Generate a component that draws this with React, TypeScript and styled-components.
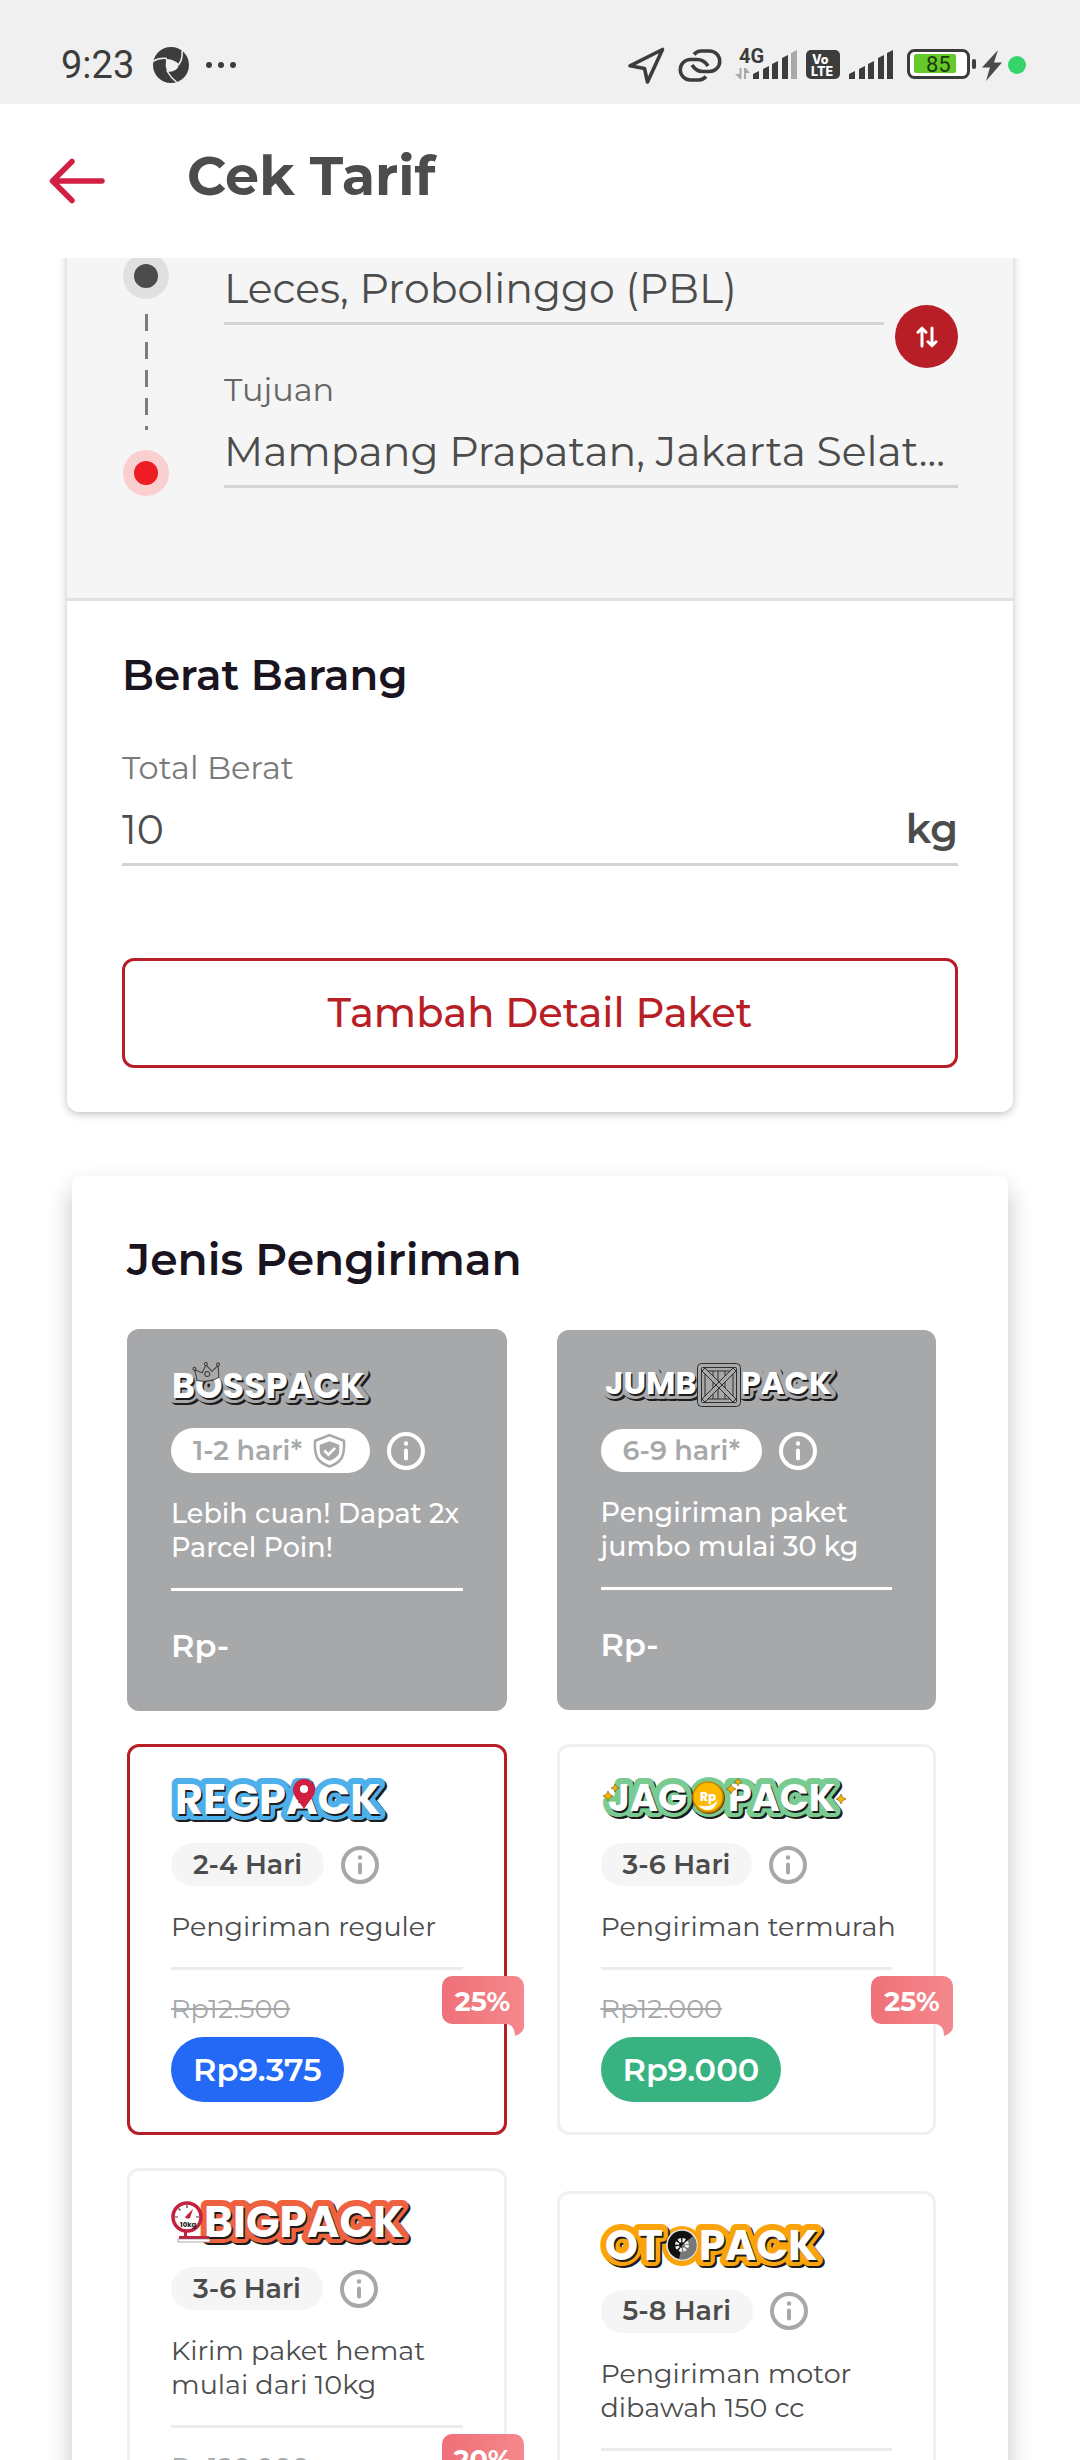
import React, { useState } from "react";
import styled, { createGlobalStyle } from "styled-components";

const color = {
  ink: "#4c4c4c",
  heading: "#1a1320",
  muted: "#a7a8aa",
  label: "#7a7a7a",
  line: "#d3d3d8",
  soft: "#f5f5f5",
  brand: "#b81e26",
};

const GlobalStyle = createGlobalStyle`
  * { box-sizing: border-box; }
  html, body, #root { height: 100%; }
  body {
    margin: 0;
    background: #fff;
    color: ${color.ink};
    font-family: Montserrat, Inter, "Open Sans", sans-serif;
    overflow: hidden;
  }
  h1, h2, p { margin: 0; }
  button, input { font: inherit; color: inherit; }
  button { cursor: pointer; padding: 0; border: 0; background: none; }
`;

/* ---------- shell ---------- */

const Screen = styled.div`
  display: flex;
  flex-direction: column;
  height: 100vh;
`;

const StatusBar = styled.div`
  display: flex;
  flex: none;
  align-items: center;
  justify-content: space-between;
  height: 104px;
  padding: 26px 54px 0 61px;
  background: #f0f0f0;
  color: #3c3c3c;

  svg {
    flex: none;
    overflow: visible;
  }
`;

const StatusGroup = styled.div<{ $gap: number }>`
  display: flex;
  align-items: center;
  gap: ${(p) => p.$gap}px;
`;

const Clock = styled.span`
  font: 400 38px/44px Roboto, sans-serif;
  margin-right: 3px;
`;

const LiveDot = styled.span`
  width: 18px;
  height: 18px;
  border-radius: 50%;
  background: #36d46a;
`;

const Header = styled.header`
  display: flex;
  flex: none;
  align-items: center;
  gap: 79px;
  height: 154px;
  padding: 0 48px;
`;

const BackButton = styled.button`
  display: flex;
  color: #d21f43;
`;

const Title = styled.h1`
  padding-bottom: 10px;
  font-size: 54px;
  line-height: 64px;
  font-weight: 700;
`;

const Scroller = styled.main`
  flex: 1;
  min-height: 0;
  overflow: hidden;
`;

/* ---------- shipment form ---------- */

const FormCard = styled.form`
  margin: -29px 67px 0;
  border-radius: 12px;
  background: #fff;
  box-shadow: 0 2px 8px rgba(0, 0, 0, 0.26);
  overflow: hidden;
`;

const RouteSection = styled.section`
  display: flex;
  align-items: flex-start;
  gap: 55px;
  padding: 24px 55px 102px 56px;
  border-bottom: 3px solid #e0e0e0;
  background: ${color.soft};
`;

const RouteTrack = styled.div`
  display: flex;
  flex: none;
  flex-direction: column;
  align-items: center;
`;

const Stop = styled.span<{ $dot: string; $halo: string }>`
  width: 46px;
  height: 46px;
  border: 11px solid ${(p) => p.$halo};
  border-radius: 50%;
  background: ${(p) => p.$dot};
`;

const Dashes = styled.span`
  width: 3px;
  height: 116px;
  margin: 15px 0 20px;
  background: repeating-linear-gradient(#7d7d7d 0 17px, transparent 17px 28px);
`;

const RouteFields = styled.div`
  display: grid;
  flex: 1;
  min-width: 0;
  grid-template-columns: 1fr 63px;
  grid-template-rows: 72px 43px auto;
  column-gap: 11px;
`;

const SwapButton = styled.button`
  display: flex;
  grid-column: 2;
  grid-row: 1 / 3;
  align-self: end;
  align-items: center;
  justify-content: center;
  height: 63px;
  border-radius: 50%;
  background: ${color.brand};
  color: #fff;
`;

const Destination = styled.div`
  grid-column: 1 / 3;
`;

const FieldLabel = styled.label<{ $tone?: string }>`
  display: block;
  margin-bottom: 4px;
  color: ${(p) => p.$tone ?? color.label};
  font-size: 32px;
  line-height: 44px;
  font-weight: 400;
`;

const FieldRow = styled.div`
  display: flex;
  align-items: center;
  height: 72px;
  border-bottom: 3px solid ${color.line};
`;

const TextInput = styled.input`
  flex: 1;
  width: 100%;
  min-width: 0;
  padding: 0;
  border: 0;
  outline: 0;
  background: none;
  font-size: 41px;
  line-height: 50px;
  font-weight: 400;
  text-overflow: ellipsis;
`;

const Unit = styled.span`
  font-size: 40px;
  line-height: 50px;
  font-weight: 600;
`;

const SectionTitle = styled.h2`
  color: ${color.heading};
  font-size: 42px;
  line-height: 50px;
  font-weight: 600;
`;

const WeightSection = styled.section`
  padding: 49px 55px 44px;

  ${SectionTitle} {
    margin-bottom: 46px;
  }
`;

const OutlineButton = styled.button`
  width: 100%;
  height: 110px;
  margin-top: 92px;
  border: 3px solid ${color.brand};
  border-radius: 12px;
  color: ${color.brand};
  font-size: 40px;
  line-height: 50px;
  font-weight: 500;
`;

/* ---------- services ---------- */

const ServicesCard = styled.section`
  margin: 64px 72px 0;
  padding: 58px 72px 80px 55px;
  border-radius: 10px;
  background: #fff;
  box-shadow: 0 12px 24px rgba(0, 0, 0, 0.24);

  ${SectionTitle} {
    font-size: 44px;
  }
`;

const ServiceGrid = styled.div`
  display: grid;
  grid-template-columns: repeat(2, minmax(0, 1fr));
  align-items: center;
  gap: 33px 50px;
  margin-top: 45px;
`;

const Service = styled.article<{ $selected?: boolean; $disabled?: boolean }>`
  padding: 30px 41px;
  border: 3px solid
    ${(p) => (p.$disabled ? color.muted : p.$selected ? color.brand : "#f0f0f0")};
  border-radius: 12px;
  background: ${(p) => (p.$disabled ? color.muted : "#fff")};
  color: ${(p) => (p.$disabled ? "#fff" : color.ink)};
`;

const LogoSvg = styled.svg`
  display: block;
  width: 250px;
  height: 44px;
  margin-bottom: 22px;
  overflow: visible;
  font-family: Poppins, Montserrat, Inter, sans-serif;
  font-weight: 700;
`;

const EtaRow = styled.div`
  display: flex;
  align-items: center;
  gap: 17px;
`;

const EtaPill = styled.span<{ $disabled?: boolean }>`
  display: flex;
  align-items: center;
  gap: 9px;
  min-height: 43px;
  padding: 4px 22px;
  border-radius: 23px;
  background: ${(p) => (p.$disabled ? "#fff" : color.soft)};
  color: ${(p) => (p.$disabled ? color.muted : color.ink)};
  font-size: 27px;
  line-height: 34px;
  font-weight: 600;
`;

const InfoButton = styled.button<{ $disabled?: boolean }>`
  display: flex;
  color: ${(p) => (p.$disabled ? "#fff" : color.muted)};
`;

const Description = styled.p<{ $disabled?: boolean }>`
  margin-top: 24px;
  padding-bottom: 23px;
  font-size: 27px;
  line-height: 34px;
  font-weight: ${(p) => (p.$disabled ? 500 : 400)};
  white-space: pre;
`;

const PriceArea = styled.div<{ $disabled?: boolean }>`
  position: relative;
  padding-top: ${(p) => (p.$disabled ? 35 : 22)}px;
  padding-bottom: ${(p) => (p.$disabled ? 12 : 0)}px;
  border-top: 3px solid ${(p) => (p.$disabled ? "#fff" : "#ebebf0")};
`;

const NoPrice = styled.p`
  font-size: 32px;
  line-height: 40px;
  font-weight: 600;
`;

const OldPrice = styled.s`
  display: block;
  margin-bottom: 11px;
  color: ${color.muted};
  font-size: 27px;
  line-height: 34px;
  text-decoration-thickness: 2px;
`;

const PriceSlot = styled.div`
  display: flex;
  min-height: 65px;
`;

const PriceButton = styled.button<{ $fill: string }>`
  height: 65px;
  padding: 0 22px;
  border-radius: 33px;
  background: ${(p) => p.$fill};
  color: #fff;
  font-size: 32px;
  line-height: 40px;
  font-weight: 600;
`;

const DiscountTag = styled.span`
  position: absolute;
  top: 6px;
  right: -61px;
  width: 82px;
  height: 60px;
  color: #fff;
  font-size: 27px;
  line-height: 52px;
  font-weight: 700;
  text-align: center;
  isolation: isolate;

  svg {
    position: absolute;
    inset: 0;
    z-index: -1;
  }
`;

/* ---------- icons ---------- */

const ApertureIcon = () => (
  <svg width="36" height="36" viewBox="0 0 36 36" aria-hidden="true">
    <circle cx="18" cy="18" r="18" fill="#3c3c3c" />
    <path d="M13 12q7 0 13 5-1 8-12 8-2-6-1-13z" fill="#f0f0f0" />
    <path
      d="M0 14.500q6-4 14-3M29 4q1 8-3.500 14M14 24q4 7 10 11.500"
      fill="none"
      stroke="#f0f0f0"
      strokeWidth="1.500"
    />
  </svg>
);

const MoreDots = () => (
  <svg width="32" height="8" viewBox="0 0 32 8" fill="#3c3c3c" aria-hidden="true">
    <circle cx="4" cy="4" r="3" />
    <circle cx="16" cy="4" r="3" />
    <circle cx="28" cy="4" r="3" />
  </svg>
);

const NavIcon = () => (
  <svg width="37" height="37" viewBox="0 0 37 37" aria-hidden="true">
    <path
      d="M34.500 2.500 19.500 35l-3-13.500L2 18.800z"
      fill="none"
      stroke="#3c3c3c"
      strokeWidth="3.600"
      strokeLinejoin="round"
    />
  </svg>
);

const LinkIcon = () => (
  <svg width="42" height="33" viewBox="0 0 42 33" aria-hidden="true">
    <g fill="none" stroke="#3c3c3c" strokeWidth="3.500">
      <path d="M15 5.500Q18 2 22 2h8.500a10 10 0 0 1 0 20.500H24q-7 0-11-6.500" />
      <path d="M27 27.500Q24 31 20 31h-8.500a10 10 0 0 1 0-20.500H18q7 0 11 6.500" />
    </g>
  </svg>
);

const bars = [
  [0, 21],
  [10, 16],
  [19, 11],
  [29, 5],
  [38, 0],
];

const Bars = ({ x = 0, weak = false }: { x?: number; weak?: boolean }) => (
  <g>
    {bars.map(([bx, top], i) => (
      <path
        key={bx}
        d={`M${x + bx} 29V${top + 3}l6-3V29z`}
        fill={weak && i === 4 ? "#a9a9a9" : "#3c3c3c"}
      />
    ))}
  </g>
);

const MobileSignal = () => (
  <svg width="62" height="32" viewBox="0 -1 62 32" aria-hidden="true">
    <text x="4" y="13" fontFamily="Roboto, sans-serif" fontSize="20" fontWeight="700" fill="#3c3c3c">
      4G
    </text>
    <path d="M0 24h4.500v-6h2v11H5zM9 29V18h2l4 5h-4v6z" fill="#a9a9a9" />
    <Bars x={18} weak />
  </svg>
);

const SecondSignal = () => (
  <svg width="44" height="32" viewBox="0 -1 44 32" aria-hidden="true">
    <Bars />
  </svg>
);

const VolteIcon = () => (
  <svg width="34" height="32" viewBox="0 -1 34 32" aria-hidden="true">
    <rect width="34" height="29" rx="5" fill="#3c3c3c" />
    <g fill="#fff" fontFamily="Inter, sans-serif" fontWeight="800" fontSize="12.500">
      <text x="6" y="13.500">Vo</text>
      <text x="5" y="26">LTE</text>
    </g>
  </svg>
);

const BatteryIcon = () => (
  <svg width="69" height="32" viewBox="0 0 69 32" aria-hidden="true">
    <rect x="1.500" y="1.500" width="60" height="27" rx="6" fill="#fff" stroke="#3c3c3c" strokeWidth="3" />
    <rect x="7" y="5" width="42" height="19" rx="2" fill="#66c92a" />
    <rect x="65" y="10" width="4" height="10" rx="2" fill="#3c3c3c" />
    <text x="19" y="23" fontFamily="Roboto, sans-serif" fontSize="22" fontWeight="400" fill="#1d3a0c">
      85
    </text>
  </svg>
);

const BoltIcon = () => (
  <svg width="20" height="31" viewBox="0 0 20 31" aria-hidden="true">
    <path d="M16 0 0 17.500h8L4 31l16-18.500h-8z" fill="#4a4a4a" />
  </svg>
);

const BackArrow = () => (
  <svg width="60" height="48" viewBox="0 0 60 48" aria-hidden="true">
    <path
      d="M54 24H5M24 4.500 4.500 24 24 43.500"
      fill="none"
      stroke="currentColor"
      strokeWidth="5.500"
      strokeLinecap="round"
      strokeLinejoin="round"
    />
  </svg>
);

const SwapIcon = () => (
  <svg width="22" height="22" viewBox="0 0 22 22" aria-hidden="true">
    <path
      d="M6 20V2.500M2 6.200l4-4 4 4M16 2v17.500M12 15.800l4 4 4-4"
      fill="none"
      stroke="currentColor"
      strokeWidth="3"
      strokeLinecap="round"
      strokeLinejoin="round"
    />
  </svg>
);

const InfoIcon = () => (
  <svg width="38" height="38" viewBox="0 0 38 38" aria-hidden="true">
    <circle cx="19" cy="19" r="17" fill="none" stroke="currentColor" strokeWidth="4" />
    <circle cx="19" cy="11.500" r="2.200" fill="currentColor" />
    <path d="M19 18.500v8" stroke="currentColor" strokeWidth="4" strokeLinecap="round" />
  </svg>
);

const ShieldIcon = () => (
  <svg width="37" height="37" viewBox="-1 -1 36 36" aria-hidden="true">
    <path
      d="M17 2 31 7.500Q32 17 29 24q-4 6-12 8.500Q9 30 5 24 2 17 3 7.500z"
      fill="none"
      stroke={color.muted}
      strokeWidth="2.500"
      strokeLinejoin="round"
    />
    <path d="M17 8 26.500 11.500v6c0 4.500-4 7.500-9.500 9.500-5.500-2-9.500-5-9.500-9.500v-6z" fill={color.muted} />
    <path d="m12 17 4 4 6.500-6.500" fill="none" stroke="#fff" strokeWidth="2.500" />
  </svg>
);

const TagShape = () => (
  <svg width="82" height="60" viewBox="0 0 82 60" aria-hidden="true">
    <defs>
      <linearGradient id="tagFill" x1="0" y1="0" x2="1" y2="0">
        <stop offset="0" stopColor="#ef7078" />
        <stop offset="1" stopColor="#f5888c" />
      </linearGradient>
    </defs>
    <path
      d="M10 0h62a10 10 0 0 1 10 10v42q-2 6-9 8 0-11-8-12H10A10 10 0 0 1 0 38V10A10 10 0 0 1 10 0z"
      fill="url(#tagFill)"
    />
  </svg>
);

/* ---------- service logos ---------- */

type Word = { x: number; text: string };

const Wordmark = ({
  words,
  y,
  size,
  outline,
  depth = 2,
  weight = 12,
}: {
  words: Word[];
  y: number;
  size: number;
  outline: string;
  depth?: number;
  weight?: number;
}) => {
  const layer = (dx: number, dy: number, fill: string, stroke: number) => (
    <g fill={fill} stroke={fill} strokeWidth={stroke} strokeLinejoin="round" fontSize={size}>
      {words.map((w) => (
        <text key={w.text} x={w.x + dx} y={y + dy}>
          {w.text}
        </text>
      ))}
    </g>
  );
  return (
    <>
      <g aria-hidden="true">
        {layer(depth, depth, "#1c1c1c", weight)}
        {layer(0, 0, outline, weight)}
        {layer(1.5, 1.5, "#1c1c1c", 0)}
      </g>
      {layer(0, 0, "#fff", 0)}
    </>
  );
};

const BossLogo = () => (
  <LogoSvg viewBox="0 0 250 44" role="img" aria-label="BOSSPACK">
    <Wordmark words={[{ x: 1, text: "BOSSPACK" }]} y={36} size={35} outline={color.muted} weight={10} />
    <g transform="rotate(-8 36 10)" fill={color.muted} stroke="#3a3a3a" strokeWidth="1">
      <path d="M25 17 24 6l7 4 5-7 5 7 7-5-1 12q-11 4-22 0z" />
      <circle cx="24" cy="5" r="1.500" />
      <circle cx="36" cy="2" r="1.500" />
      <circle cx="48" cy="4" r="1.500" />
      <circle cx="36" cy="12" r="2.500" />
    </g>
  </LogoSvg>
);

const JumboLogo = () => (
  <LogoSvg viewBox="0 0 250 44" role="img" aria-label="JUMBOPACK">
    <Wordmark
      words={[
        { x: 4, text: "JUMB" },
        { x: 140, text: "PACK" },
      ]}
      y={31}
      size={32}
      outline={color.muted}
      weight={10}
    />
    <g fill={color.muted} stroke="#2e2e2e" strokeWidth="1">
      <rect x="96.500" y=".5" width="43" height="43" rx="4" />
      <rect x="100.500" y="4.500" width="35" height="35" rx="1" />
      <path d="M104 8h28v28h-28zM112 8v28M117 8v28M124 8v28" />
      <path d="m101 8 3-3 31 31-3 3zM132 5l3 3-31 31-3-3z" />
    </g>
  </LogoSvg>
);

const RegLogo = () => (
  <LogoSvg viewBox="0 0 250 44" role="img" aria-label="REGPACK">
    <Wordmark words={[{ x: 4, text: "REGPACK" }]} y={37} size={43} outline="#4eb0ea" />
    <path d="M133 32c-6-9-11-13-11-19a11 11 0 0 1 22 0c0 6-5 10-11 19z" fill="#d01f40" />
    <circle cx="133" cy="12" r="4" fill="#fff" />
  </LogoSvg>
);

const Spark = ({ x, y, r }: { x: number; y: number; r: number }) => (
  <path
    d={`M${x} ${y - r}l${r / 3} ${(r * 2) / 3} ${(r * 2) / 3} ${r / 3} ${(-r * 2) / 3} ${r / 3} ${-r / 3} ${(r * 2) / 3} ${-r / 3} ${(-r * 2) / 3} ${(-r * 2) / 3} ${-r / 3} ${(r * 2) / 3} ${-r / 3}z`}
    fill="#f6b400"
    stroke="#7a5a10"
    strokeWidth=".6"
  />
);

const JagoLogo = () => (
  <LogoSvg viewBox="0 0 250 44" role="img" aria-label="JAGOPACK">
    <circle cx="109" cy="22" r="20" fill="#1c1c1c" />
    <circle cx="108" cy="20" r="20" fill="#79cb92" />
    <Wordmark
      words={[
        { x: 7, text: "JAG" },
        { x: 127, text: "PACK" },
      ]}
      y={34}
      size={38}
      outline="#79cb92"
    />
    <circle cx="108" cy="21" r="16" fill="#7a4b00" />
    <circle cx="107" cy="20" r="15" fill="#fdb900" stroke="#c98a00" strokeWidth="1.500" />
    <path d="M97 28q12 4 20-5-3 10-10 10-6 0-10-5z" fill="#fff" />
    <text x="99" y="24" fontSize="12" fontWeight="800" fill="#fff">
      Rp
    </text>
    <Spark x={7} y={19} r={5} />
    <Spark x={14} y={11} r={4} />
    <Spark x={130} y={12} r={5} />
    <Spark x={137} y={5} r={4} />
    <Spark x={240} y={22} r={5} />
  </LogoSvg>
);

const BigLogo = () => (
  <LogoSvg viewBox="0 0 250 44" role="img" aria-label="BIGPACK">
    <Wordmark words={[{ x: 33, text: "BIGPACK" }]} y={36} size={44} outline="#ee6240" />
    <rect x="12" y="27" width="9" height="9" fill="#fff" />
    <path d="M13 30h3v6h-3z" fill="#c4203f" />
    <circle cx="16" cy="16" r="14" fill="#fff" stroke="#c4203f" strokeWidth="3.500" />
    <g stroke="#444" strokeWidth="1.200">
      <path d="M16 4v3M4 16h3M25 16h3M7.500 7.500l2 2" />
    </g>
    <path d="m22 8-3 9q-3 2-5-1z" fill="#c4203f" />
    <text x="9" y="26" fontSize="7" fill="#222">
      10kg
    </text>
    <path d="M8 35h30v3H8z" fill="#c4203f" />
    <path d="M7 38h32v3H7z" fill="#fff" stroke="#777" strokeWidth=".6" />
  </LogoSvg>
);

const OtoLogo = () => (
  <LogoSvg viewBox="0 0 250 44" role="img" aria-label="OTOPACK">
    <circle cx="81" cy="22" r="20" fill="#fba30a" />
    <Wordmark
      words={[
        { x: 4, text: "OT" },
        { x: 98, text: "PACK" },
      ]}
      y={36}
      size={42}
      outline="#fba30a"
    />
    <circle cx="81" cy="21" r="15" fill="#111" stroke="#e6e6e6" strokeWidth="1.500" />
    <path d="M81 21 92 12a14 14 0 0 1-14 23z" fill="#777" />
    <circle cx="81" cy="21" r="5" fill="none" stroke="#eee" strokeWidth="4" strokeDasharray="2.500 1.400" />
  </LogoSvg>
);

/* ---------- data ---------- */

type ServiceItem = {
  id: string;
  Logo: () => React.ReactElement;
  eta: string;
  text: string;
  disabled?: boolean;
  insured?: boolean;
  oldPrice?: string;
  price?: string;
  fill?: string;
  discount?: string;
};

const services: ServiceItem[] = [
  { id: "boss", Logo: BossLogo, eta: "1-2 hari*", text: "Lebih cuan! Dapat 2x\nParcel Poin!", disabled: true, insured: true },
  { id: "jumbo", Logo: JumboLogo, eta: "6-9 hari*", text: "Pengiriman paket\njumbo mulai 30 kg", disabled: true },
  { id: "reg", Logo: RegLogo, eta: "2-4 Hari", text: "Pengiriman reguler", oldPrice: "Rp12.500", price: "Rp9.375", fill: "#2469f5", discount: "25%" },
  { id: "jago", Logo: JagoLogo, eta: "3-6 Hari", text: "Pengiriman termurah", oldPrice: "Rp12.000", price: "Rp9.000", fill: "#38b280", discount: "25%" },
  { id: "big", Logo: BigLogo, eta: "3-6 Hari", text: "Kirim paket hemat\nmulai dari 10kg", oldPrice: "Rp120.000", discount: "20%" },
  { id: "oto", Logo: OtoLogo, eta: "5-8 Hari", text: "Pengiriman motor\ndibawah 150 cc" },
];

export default function App() {
  const [origin, setOrigin] = useState("Leces, Probolinggo (PBL)");
  const [destination, setDestination] = useState("Mampang Prapatan, Jakarta Selat...");
  const [weight, setWeight] = useState("10");
  const [selected, setSelected] = useState("reg");

  const swap = () => {
    setOrigin(destination);
    setDestination(origin);
  };

  return (
    <Screen>
      <GlobalStyle />
      <StatusBar>
        <StatusGroup $gap={16}>
          <Clock>9:23</Clock>
          <ApertureIcon />
          <MoreDots />
        </StatusGroup>
        <StatusGroup $gap={14}>
          <NavIcon />
          <LinkIcon />
          <StatusGroup $gap={9}>
            <MobileSignal />
            <VolteIcon />
            <SecondSignal />
          </StatusGroup>
          <StatusGroup $gap={6}>
            <BatteryIcon />
            <BoltIcon />
            <LiveDot />
          </StatusGroup>
        </StatusGroup>
      </StatusBar>
      <Header>
        <BackButton type="button" aria-label="Kembali">
          <BackArrow />
        </BackButton>
        <Title>Cek Tarif</Title>
      </Header>
      <Scroller>
        <FormCard onSubmit={(e) => e.preventDefault()}>
          <RouteSection>
            <RouteTrack aria-hidden="true">
              <Stop $dot={color.ink} $halo="#e0e0e0" />
              <Dashes />
              <Stop $dot="#ee1c24" $halo="#facfd0" />
            </RouteTrack>
            <RouteFields>
              <FieldRow>
                <TextInput aria-label="Asal" value={origin} onChange={(e) => setOrigin(e.target.value)} />
              </FieldRow>
              <SwapButton type="button" aria-label="Tukar" onClick={swap}>
                <SwapIcon />
              </SwapButton>
              <Destination>
                <FieldLabel htmlFor="destination" $tone="#666">
                  Tujuan
                </FieldLabel>
                <FieldRow>
                  <TextInput id="destination" value={destination} onChange={(e) => setDestination(e.target.value)} />
                </FieldRow>
              </Destination>
            </RouteFields>
          </RouteSection>
          <WeightSection>
            <SectionTitle>Berat Barang</SectionTitle>
            <FieldLabel htmlFor="weight">Total Berat</FieldLabel>
            <FieldRow>
              <TextInput id="weight" inputMode="numeric" value={weight} onChange={(e) => setWeight(e.target.value)} />
              <Unit>kg</Unit>
            </FieldRow>
            <OutlineButton type="button">Tambah Detail Paket</OutlineButton>
          </WeightSection>
        </FormCard>

        <ServicesCard>
          <SectionTitle>Jenis Pengiriman</SectionTitle>
          <ServiceGrid>
            {services.map((s) => (
              <Service key={s.id} $disabled={s.disabled} $selected={s.id === selected}>
                <s.Logo />
                <EtaRow>
                  <EtaPill $disabled={s.disabled}>
                    {s.eta}
                    {s.insured && <ShieldIcon />}
                  </EtaPill>
                  <InfoButton type="button" aria-label="Info" $disabled={s.disabled}>
                    <InfoIcon />
                  </InfoButton>
                </EtaRow>
                <Description $disabled={s.disabled}>{s.text}</Description>
                <PriceArea $disabled={s.disabled}>
                  {s.disabled && <NoPrice>Rp-</NoPrice>}
                  {s.oldPrice && <OldPrice>{s.oldPrice}</OldPrice>}
                  {!s.disabled && (
                    <PriceSlot>
                      {s.price && (
                        <PriceButton type="button" $fill={s.fill ?? color.brand} onClick={() => setSelected(s.id)}>
                          {s.price}
                        </PriceButton>
                      )}
                    </PriceSlot>
                  )}
                  {s.discount && (
                    <DiscountTag>
                      <TagShape />
                      {s.discount}
                    </DiscountTag>
                  )}
                </PriceArea>
              </Service>
            ))}
          </ServiceGrid>
        </ServicesCard>
      </Scroller>
    </Screen>
  );
}
